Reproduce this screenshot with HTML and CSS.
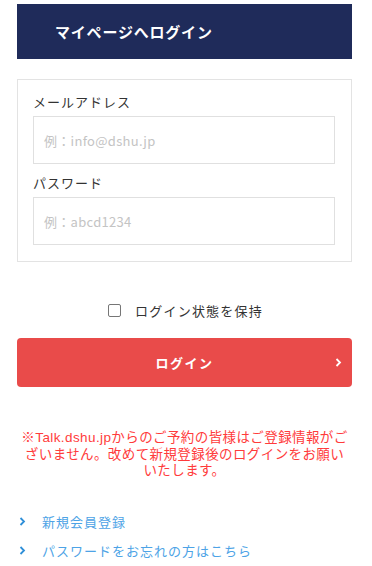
FILE: index.html
```html
<!DOCTYPE html>
<html lang="ja">
<head>
<meta charset="utf-8">
<link rel="stylesheet" href="styles.css">
</head>
<body>
<div class="page">
  <div class="header">マイページへログイン</div>
  <div class="formbox">
    <div class="label">メールアドレス</div>
    <div class="input">例：info@dshu.jp</div>
    <div class="label label2">パスワード</div>
    <div class="input">例：abcd1234</div>
  </div>
  <div class="keep">
    <span class="checkbox"></span>
    <span class="keep-text">ログイン状態を保持</span>
  </div>
  <div class="btn">
    <span class="btn-text">ログイン</span>
    <svg class="btn-chev" width="7" height="9" viewBox="0 0 7 9"><path d="M1.5 1 L5 4.5 L1.5 8" fill="none" stroke="#fff" stroke-width="1.8"/></svg>
  </div>
  <p class="notice">※Talk.dshu.jpからのご予約の皆様はご登録情報がございません。改めて新規登録後のログインをお願いいたします。</p>
  <ul class="links">
    <li><svg class="chev" width="7" height="9" viewBox="0 0 7 9"><path d="M1.5 1 L5 4.5 L1.5 8" fill="none" stroke="#2f8fd8" stroke-width="1.8"/></svg><span>新規会員登録</span></li>
    <li><svg class="chev" width="7" height="9" viewBox="0 0 7 9"><path d="M1.5 1 L5 4.5 L1.5 8" fill="none" stroke="#2f8fd8" stroke-width="1.8"/></svg><span>パスワードをお忘れの方はこちら</span></li>
  </ul>
</div>
</body>
</html>
```

FILE: styles.css
```css
* { box-sizing: border-box; }
body {
  margin: 0;
  background: #fff;
  font-family: "Noto Sans CJK JP", "Noto Sans", sans-serif;
  color: #333;
}
.page {
  padding: 4px 20px 0 17px;
  width: 372px;
}
.header {
  height: 55px;
  background: #1f2b5a;
  color: #fff;
  font-weight: bold;
  font-size: 15px;
  letter-spacing: 0.8px;
  display: flex;
  align-items: center;
  padding-left: 38px;
}
.formbox {
  margin-top: 20px;
  border: 1px solid #e3e3e3;
  padding: 13px 16px 16px 15px;
}
.label {
  font-size: 13px;
  letter-spacing: 1px;
  line-height: 18px;
  color: #333;
  margin-bottom: 5px;
}
.label2 { margin-top: 10px; margin-bottom: 5px; }
.input {
  height: 48px;
  border: 1px solid #e0e0e0;
  font-size: 13px;
  color: #c4c4c4;
  padding-left: 10px;
  display: flex;
  align-items: center;
  letter-spacing: 0.3px;
}
.keep {
  margin-top: 39px;
  display: flex;
  align-items: center;
  justify-content: center;
  height: 18px;
  padding-left: 2px;
}
.checkbox {
  width: 13px;
  height: 13px;
  border: 1px solid #767676;
  border-radius: 2px;
  margin-right: 14px;
}
.keep-text {
  font-size: 13px;
  letter-spacing: 1.2px;
  color: #333;
}
.btn {
  margin-top: 19px;
  height: 49px;
  background: #e94b4a;
  border-radius: 4px;
  display: flex;
  align-items: center;
  justify-content: center;
  position: relative;
}
.btn-text {
  color: #fff;
  font-weight: bold;
  font-size: 13px;
  letter-spacing: 1.5px;
}
.btn-chev {
  position: absolute;
  right: 10px;
  top: 20px;
}
.notice {
  margin: 43px 0 0 0;
  padding: 0 2px;
  text-align: center;
  color: #ff3b3b;
  font-family: "Liberation Sans", "Noto Sans CJK JP", sans-serif;
  font-size: 13.5px;
  line-height: 16.5px;
  letter-spacing: 0.4px;
}
.links {
  list-style: none;
  margin: 33px 0 0 0;
  padding: 0;
}
.links li {
  display: flex;
  align-items: center;
  height: 18px;
  margin-bottom: 11px;
  font-size: 13px;
  color: #4da3e6;
  letter-spacing: 1px;
}
.chev {
  margin-left: 2px;
  margin-right: 16px;
}
```
